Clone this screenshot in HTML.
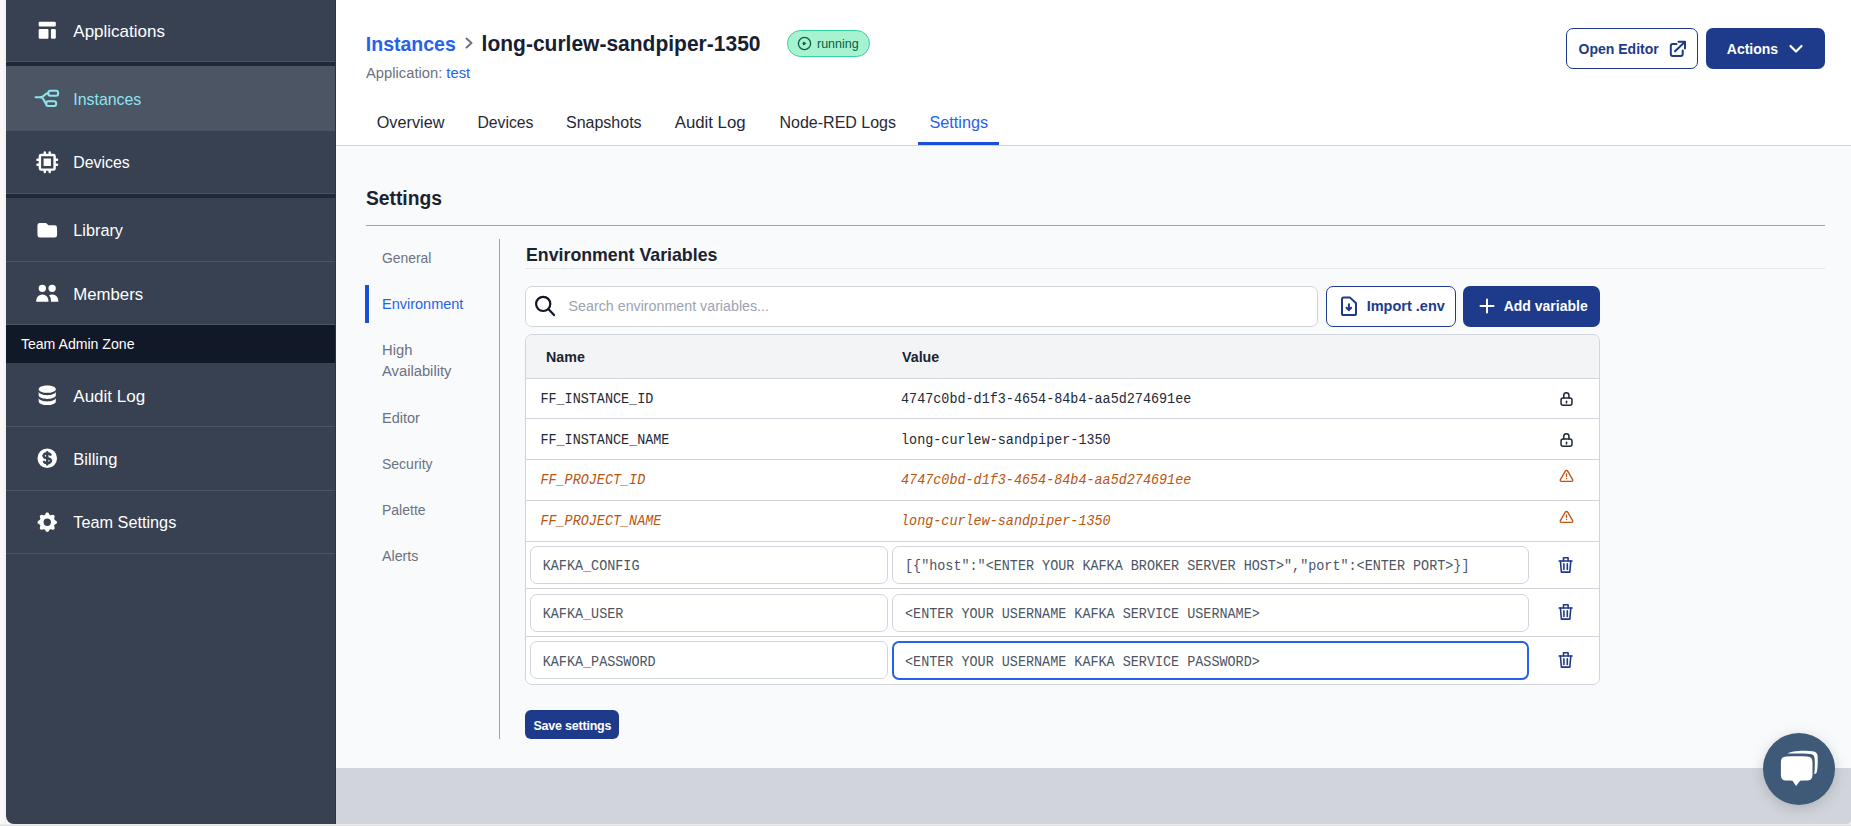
<!DOCTYPE html>
<html><head><meta charset="utf-8">
<style>
*{box-sizing:border-box;margin:0;padding:0}
html,body{width:1851px;height:826px;overflow:hidden;background:#f8f8f8;font-family:"Liberation Sans",sans-serif}
body{position:relative}
.a{position:absolute;display:block}
.t{position:absolute;white-space:nowrap;line-height:1}
</style></head><body>

<div class="a" style="left:4px;top:0px;width:2px;height:826px;background:#f2f2f2"></div>
<div class="a" style="left:0px;top:824px;width:1851px;height:1px;background:#ececec"></div>
<div class="a" style="left:0px;top:825px;width:1851px;height:1px;background:#e0e0e0"></div>
<div class="a" style="left:6px;top:0px;width:1845px;height:824px;background:#f9fafb;border-radius:0 0 4px 8px"></div>
<div class="a" style="left:336px;top:768px;width:1515px;height:56px;background:#d1d5db;border-radius:0 0 4px 0"></div>
<div class="a" style="left:336px;top:0px;width:1515px;height:146px;background:#fff;border-bottom:1px solid #d1d5db"></div>
<div class="a" style="left:6px;top:0px;width:330px;height:824px;background:#374151;border-radius:0 0 0 8px"></div>
<div class="a" style="left:6px;top:0px;width:329px;height:62px;background:#374151;border-bottom:1px solid #4b5563;"></div>
<div class="t" style="left:73.30px;top:23px;font-size:17px;color:#ffffff;font-weight:400;font-family:'Liberation Sans',sans-serif;font-style:normal;">Applications</div>
<svg class="a" style="left:34.75px;top:17.75px" width="24.5" height="24.5" viewBox="0 0 20 20"><path fill="#fff" d="M3 4a1 1 0 011-1h12a1 1 0 011 1v2a1 1 0 01-1 1H4a1 1 0 01-1-1V4zM3 10a1 1 0 011-1h6a1 1 0 011 1v6a1 1 0 01-1 1H4a1 1 0 01-1-1v-6zM14 9a1 1 0 00-1 1v6a1 1 0 001 1h2a1 1 0 001-1v-6a1 1 0 00-1-1h-2z"/></svg>
<div class="a" style="left:6px;top:62px;width:329px;height:4px;background:#1f2937"></div>
<div class="a" style="left:6px;top:66px;width:329px;height:65px;background:#4b5563;"></div>
<div class="t" style="left:73.30px;top:92px;font-size:15.9px;color:#8ee4ee;font-weight:400;font-family:'Liberation Sans',sans-serif;font-style:normal;">Instances</div>
<svg class="a" style="left:33px;top:86px" width="28" height="24" viewBox="0 0 28 24"><g fill="none" stroke="#8ee4ee" stroke-width="2.1" stroke-linejoin="round" stroke-linecap="round"><path d="M2.6 11.2H7.6C9.2 11.2 10.2 10.4 11.2 9.4L12.4 8.2C13.2 7.5 14 7.2 15.3 7.2"/><path d="M7.6 11.2C9 11.4 9.9 12.2 10.7 13.6L11.6 15.5C12.1 16.9 12.6 17.6 13.2 17.6"/><rect x="15.3" y="4.7" width="9.8" height="5" rx="2"/><rect x="13.2" y="15.2" width="9.9" height="4.8" rx="2"/></g></svg>
<div class="a" style="left:6px;top:131px;width:329px;height:63px;background:#374151;border-bottom:1px solid #4b5563;"></div>
<div class="t" style="left:73.30px;top:155px;font-size:15.9px;color:#ffffff;font-weight:400;font-family:'Liberation Sans',sans-serif;font-style:normal;">Devices</div>
<svg class="a" style="left:34.75px;top:149.75px" width="24.5" height="24.5" viewBox="0 0 20 20"><path fill="#fff" fill-rule="evenodd" clip-rule="evenodd" d="M13 7H7v6h6V7z M7 2a1 1 0 012 0v1h2V2a1 1 0 112 0v1h2a2 2 0 012 2v2h1a1 1 0 110 2h-1v2h1a1 1 0 110 2h-1v2a2 2 0 01-2 2h-2v1a1 1 0 11-2 0v-1H9v1a1 1 0 11-2 0v-1H5a2 2 0 01-2-2v-2H2a1 1 0 110-2h1V9H2a1 1 0 010-2h1V5a2 2 0 012-2h2V2zM5 5h10v10H5V5z"/></svg>
<div class="a" style="left:6px;top:194px;width:329px;height:4px;background:#1f2937"></div>
<div class="a" style="left:6px;top:198px;width:329px;height:64px;background:#374151;border-bottom:1px solid #4b5563;"></div>
<div class="t" style="left:73.30px;top:222px;font-size:16.25px;color:#ffffff;font-weight:400;font-family:'Liberation Sans',sans-serif;font-style:normal;">Library</div>
<svg class="a" style="left:34.75px;top:218.05px" width="24.5" height="24.5" viewBox="0 0 20 20"><path fill="#fff" d="M2 6a2 2 0 012-2h5l2 2h5a2 2 0 012 2v6a2 2 0 01-2 2H4a2 2 0 01-2-2V6z"/></svg>
<div class="a" style="left:6px;top:262px;width:329px;height:63px;background:#374151;border-bottom:1px solid #4b5563;"></div>
<div class="t" style="left:73.30px;top:287px;font-size:16.75px;color:#ffffff;font-weight:400;font-family:'Liberation Sans',sans-serif;font-style:normal;">Members</div>
<svg class="a" style="left:34.75px;top:280.75px" width="24.5" height="24.5" viewBox="0 0 20 20"><path fill="#fff" d="M9 6a3 3 0 11-6 0 3 3 0 016 0zM17 6a3 3 0 11-6 0 3 3 0 016 0zM12.93 17c.046-.327.07-.66.07-1a6.97 6.97 0 00-1.5-4.33A5 5 0 0119 16v1h-6.07zM6 11a5 5 0 015 5v1H1v-1a5 5 0 015-5z"/></svg>
<div class="a" style="left:6px;top:325px;width:329px;height:38px;background:#111827"></div>
<div class="t" style="left:20.90px;top:337px;font-size:14.1px;color:#ffffff;font-weight:400;font-family:'Liberation Sans',sans-serif;font-style:normal;">Team Admin Zone</div>
<div class="a" style="left:6px;top:363px;width:329px;height:64px;background:#374151;border-bottom:1px solid #4b5563;"></div>
<div class="t" style="left:73.30px;top:388px;font-size:17px;color:#ffffff;font-weight:400;font-family:'Liberation Sans',sans-serif;font-style:normal;">Audit Log</div>
<svg class="a" style="left:34.75px;top:382.95px" width="24.5" height="24.5" viewBox="0 0 20 20"><path fill="#fff" d="M3 12v3c0 1.657 3.134 3 7 3s7-1.343 7-3v-3c0 1.657-3.134 3-7 3s-7-1.343-7-3z M3 7v3c0 1.657 3.134 3 7 3s7-1.343 7-3V7c0 1.657-3.134 3-7 3S3 8.657 3 7z M17 5c0 1.657-3.134 3-7 3S3 6.657 3 5s3.134-3 7-3 7 1.343 7 3z"/></svg>
<div class="a" style="left:6px;top:427px;width:329px;height:64px;background:#374151;border-bottom:1px solid #4b5563;"></div>
<div class="t" style="left:73.30px;top:451px;font-size:16.5px;color:#ffffff;font-weight:400;font-family:'Liberation Sans',sans-serif;font-style:normal;">Billing</div>
<svg class="a" style="left:34.75px;top:445.95px" width="24.5" height="24.5" viewBox="0 0 20 20"><path fill="#fff" fill-rule="evenodd" clip-rule="evenodd" d="M8.433 7.418c.155-.103.346-.196.567-.267v1.698a2.305 2.305 0 01-.567-.267C8.07 8.34 8 8.114 8 8c0-.114.07-.34.433-.582zM11 12.849v-1.698c.22.071.412.164.567.267.364.243.433.468.433.582 0 .114-.07.34-.433.582a2.305 2.305 0 01-.567.267z M10 18a8 8 0 100-16 8 8 0 000 16zm1-13a1 1 0 10-2 0v.092a4.535 4.535 0 00-1.676.662C6.602 6.234 6 7.009 6 8c0 .99.602 1.765 1.324 2.246.48.32 1.054.545 1.676.662v1.941c-.391-.127-.68-.317-.843-.504a1 1 0 10-1.51 1.31c.562.649 1.413 1.076 2.353 1.253V15a1 1 0 102 0v-.092a4.535 4.535 0 001.676-.662C13.398 13.766 14 12.991 14 12c0-.99-.602-1.765-1.324-2.246A4.535 4.535 0 0011 9.092V7.151c.391.127.68.317.843.504a1 1 0 101.511-1.31c-.563-.649-1.413-1.076-2.354-1.253V5z"/></svg>
<div class="a" style="left:6px;top:491px;width:329px;height:63px;background:#374151;border-bottom:1px solid #4b5563;"></div>
<div class="t" style="left:73.30px;top:514px;font-size:16.25px;color:#ffffff;font-weight:400;font-family:'Liberation Sans',sans-serif;font-style:normal;">Team Settings</div>
<svg class="a" style="left:34.75px;top:509.75px" width="24.5" height="24.5" viewBox="0 0 20 20"><path fill="#fff" fill-rule="evenodd" clip-rule="evenodd" d="M11.49 3.17c-.38-1.56-2.6-1.56-2.98 0a1.532 1.532 0 01-2.286.948c-1.372-.836-2.942.734-2.106 2.106.54.886.061 2.042-.947 2.287-1.561.379-1.561 2.6 0 2.978a1.532 1.532 0 01.947 2.287c-.836 1.372.734 2.942 2.106 2.106a1.532 1.532 0 012.287.947c.379 1.561 2.6 1.561 2.978 0a1.533 1.533 0 012.287-.947c1.372.836 2.942-.734 2.106-2.106a1.533 1.533 0 01.947-2.287c1.561-.379 1.561-2.6 0-2.978a1.532 1.532 0 01-.947-2.287c.836-1.372-.734-2.942-2.106-2.106a1.532 1.532 0 01-2.287-.947zM10 13a3 3 0 100-6 3 3 0 000 6z"/></svg>
<div class="a" style="left:335px;top:0px;width:1px;height:824px;background:rgba(0,0,0,0.2)"></div>
<div class="t" style="left:365.80px;top:35px;font-size:19.5px;color:#2563eb;font-weight:700;font-family:'Liberation Sans',sans-serif;font-style:normal;transform:scaleY(1.07);transform-origin:0 16px;">Instances</div>
<svg class="a" style="left:463px;top:36.3px;" width="12" height="14" viewBox="0 0 12 14"><path d="M3.5 2.5L8.5 7L3.5 11.5" fill="none" stroke="#6b7280" stroke-width="2" stroke-linecap="round" stroke-linejoin="round"/></svg>
<div class="t" style="left:481.60px;top:33px;font-size:21px;color:#172033;font-weight:700;font-family:'Liberation Sans',sans-serif;font-style:normal;transform:scaleY(1.05);transform-origin:0 18px;">long-curlew-sandpiper-1350</div>
<div class="a" style="left:787px;top:30px;width:83px;height:27px;background:#a7f3d0;border:1px solid #34d399;border-radius:14px"></div>
<svg class="a" style="left:797px;top:36px;" width="15" height="15" viewBox="0 0 15 15"><circle cx="7.5" cy="7.5" r="6.1" fill="none" stroke="#065f46" stroke-width="1.3"/><path d="M6.2 5.6v3.8l3.2-1.9z" fill="#065f46"/><circle cx="6.9" cy="7.5" r="1.3" fill="#065f46"/></svg>
<div class="t" style="left:817.00px;top:38px;font-size:12.5px;color:#065f46;font-weight:400;font-family:'Liberation Sans',sans-serif;font-style:normal;">running</div>
<div class="t" style="left:366.00px;top:66px;font-size:14.75px;color:#6b7280;font-weight:400;font-family:'Liberation Sans',sans-serif;font-style:normal;">Application: <span style="color:#2563eb">test</span></div>
<div class="t" style="left:376.70px;top:114px;font-size:16.25px;color:#1f2937;font-weight:400;font-family:'Liberation Sans',sans-serif;font-style:normal;">Overview</div>
<div class="t" style="left:477.40px;top:115px;font-size:15.75px;color:#1f2937;font-weight:400;font-family:'Liberation Sans',sans-serif;font-style:normal;">Devices</div>
<div class="t" style="left:566.00px;top:115px;font-size:16px;color:#1f2937;font-weight:400;font-family:'Liberation Sans',sans-serif;font-style:normal;">Snapshots</div>
<div class="t" style="left:674.70px;top:115px;font-size:16.8px;color:#1f2937;font-weight:400;font-family:'Liberation Sans',sans-serif;font-style:normal;">Audit Log</div>
<div class="t" style="left:779.50px;top:115px;font-size:16px;color:#1f2937;font-weight:400;font-family:'Liberation Sans',sans-serif;font-style:normal;">Node-RED Logs</div>
<div class="t" style="left:929.40px;top:114px;font-size:16.25px;color:#2563eb;font-weight:400;font-family:'Liberation Sans',sans-serif;font-style:normal;">Settings</div>
<div class="a" style="left:918px;top:142px;width:81px;height:3px;background:#1d4ed8"></div>
<div class="a" style="left:1566px;top:28px;width:132px;height:41px;border:1px solid #1e3a8a;border-radius:7px;background:#fff"></div>
<div class="t" style="left:1578.60px;top:42px;font-size:14px;color:#1e3a8a;font-weight:700;font-family:'Liberation Sans',sans-serif;font-style:normal;">Open Editor</div>
<svg class="a" style="left:1668px;top:39px;" width="20" height="20" viewBox="0 0 20 20"><g fill="none" stroke="#1e3a8a" stroke-width="2" stroke-linecap="round" stroke-linejoin="round"><path d="M8.5 5H4.8a2 2 0 00-2 2v8a2 2 0 002 2h7.9a2 2 0 002-2v-3.6"/><path d="M10.5 2.8H17V9.5"/><path d="M7 12.2L16.5 3.3"/></g></svg>
<div class="a" style="left:1706px;top:28px;width:119px;height:41px;background:#1e3a8a;border-radius:7px"></div>
<div class="t" style="left:1726.80px;top:42px;font-size:14px;color:#fff;font-weight:700;font-family:'Liberation Sans',sans-serif;font-style:normal;">Actions</div>
<svg class="a" style="left:1788px;top:43px;" width="16" height="12" viewBox="0 0 16 12"><path d="M2.5 3L8 8.5L13.5 3" fill="none" stroke="#fff" stroke-width="2.2" stroke-linecap="round" stroke-linejoin="round"/></svg>
<div class="t" style="left:366.00px;top:189px;font-size:19.25px;color:#1a2332;font-weight:700;font-family:'Liberation Sans',sans-serif;font-style:normal;transform:scaleY(1.08);transform-origin:0 16px;">Settings</div>
<div class="a" style="left:366px;top:225px;width:1459px;height:1px;background:#9ca3af"></div>
<div class="t" style="left:382.00px;top:252px;font-size:13.9px;color:#6b7280;font-weight:400;font-family:'Liberation Sans',sans-serif;font-style:normal;">General</div>
<div class="a" style="left:365px;top:285px;width:4px;height:38px;background:#1d4ed8"></div>
<div class="t" style="left:382.00px;top:297px;font-size:14.5px;color:#2563eb;font-weight:400;font-family:'Liberation Sans',sans-serif;font-style:normal;">Environment</div>
<div class="t" style="left:382.00px;top:343px;font-size:14.75px;color:#6b7280;font-weight:400;font-family:'Liberation Sans',sans-serif;font-style:normal;">High</div>
<div class="t" style="left:382.00px;top:364px;font-size:14.75px;color:#6b7280;font-weight:400;font-family:'Liberation Sans',sans-serif;font-style:normal;">Availability</div>
<div class="t" style="left:382.00px;top:411px;font-size:14.5px;color:#6b7280;font-weight:400;font-family:'Liberation Sans',sans-serif;font-style:normal;">Editor</div>
<div class="t" style="left:382.00px;top:457px;font-size:14px;color:#6b7280;font-weight:400;font-family:'Liberation Sans',sans-serif;font-style:normal;">Security</div>
<div class="t" style="left:382.00px;top:503px;font-size:14px;color:#6b7280;font-weight:400;font-family:'Liberation Sans',sans-serif;font-style:normal;">Palette</div>
<div class="t" style="left:382.00px;top:549px;font-size:14.25px;color:#6b7280;font-weight:400;font-family:'Liberation Sans',sans-serif;font-style:normal;">Alerts</div>
<div class="a" style="left:499px;top:239px;width:1px;height:500px;background:#9ca3af"></div>
<div class="t" style="left:526.00px;top:247px;font-size:17.75px;color:#1a2332;font-weight:700;font-family:'Liberation Sans',sans-serif;font-style:normal;">Environment Variables</div>
<div class="a" style="left:525px;top:268px;width:1300px;height:1px;background:#e5e7eb"></div>
<div class="a" style="left:525px;top:286px;width:793px;height:41px;background:#fff;border:1px solid #d1d5db;border-radius:7px"></div>
<svg class="a" style="left:533px;top:294px;" width="24" height="24" viewBox="0 0 24 24"><g fill="none" stroke="#111827" stroke-width="2.2" stroke-linecap="round"><circle cx="10.2" cy="9.9" r="7.1"/><path d="M15.4 15.1l5.6 6"/></g></svg>
<div class="t" style="left:568.60px;top:299px;font-size:14.25px;color:#9ca3af;font-weight:400;font-family:'Liberation Sans',sans-serif;font-style:normal;">Search environment variables...</div>
<div class="a" style="left:1326px;top:286px;width:130px;height:41px;background:#fff;border:1px solid #1e3a8a;border-radius:7px"></div>
<svg class="a" style="left:1339px;top:295px;" width="20" height="22" viewBox="0 0 20 22"><g fill="none" stroke="#1e3a8a" stroke-width="2" stroke-linecap="round" stroke-linejoin="round"><path d="M4.6 2.6h6.5l5.9 5.7v10.2a1.6 1.6 0 01-1.6 1.6H4.6A1.6 1.6 0 013 18.5V4.2A1.6 1.6 0 014.6 2.6z"/><path d="M9.9 9.2v6M7.6 12.8L9.9 15.1l2.3-2.3"/></g></svg>
<div class="t" style="left:1366.70px;top:299px;font-size:14.5px;color:#1e3a8a;font-weight:700;font-family:'Liberation Sans',sans-serif;font-style:normal;">Import .env</div>
<div class="a" style="left:1463px;top:286px;width:137px;height:41px;background:#1e3a8a;border-radius:7px"></div>
<svg class="a" style="left:1479px;top:298px;" width="16" height="16" viewBox="0 0 16 16"><path d="M8 1.5v13M1.5 8h13" stroke="#fff" stroke-width="2" stroke-linecap="round"/></svg>
<div class="t" style="left:1503.70px;top:299px;font-size:14px;color:#fff;font-weight:700;font-family:'Liberation Sans',sans-serif;font-style:normal;">Add variable</div>
<div class="a" style="left:525px;top:334px;width:1075px;height:351px;background:#fff;border:1px solid #d1d5db;border-radius:7px;overflow:hidden"></div>
<div class="a" style="left:526px;top:335px;width:1073px;height:43px;background:#f3f4f6;border-radius:6px 6px 0 0"></div>
<div class="t" style="left:546.00px;top:350px;font-size:14.25px;color:#1a2332;font-weight:700;font-family:'Liberation Sans',sans-serif;font-style:normal;">Name</div>
<div class="t" style="left:902.00px;top:350px;font-size:14.25px;color:#1a2332;font-weight:700;font-family:'Liberation Sans',sans-serif;font-style:normal;">Value</div>
<div class="a" style="left:526px;top:378px;width:1073px;height:1px;background:#d1d5db"></div>
<div class="a" style="left:526px;top:418px;width:1073px;height:1px;background:#d1d5db"></div>
<div class="a" style="left:526px;top:459px;width:1073px;height:1px;background:#d1d5db"></div>
<div class="a" style="left:526px;top:500px;width:1073px;height:1px;background:#d1d5db"></div>
<div class="a" style="left:526px;top:541px;width:1073px;height:1px;background:#d1d5db"></div>
<div class="a" style="left:526px;top:588px;width:1073px;height:1px;background:#d1d5db"></div>
<div class="a" style="left:526px;top:636px;width:1073px;height:1px;background:#d1d5db"></div>
<div class="t" style="left:540.40px;top:393px;font-size:13.45px;color:#1f2937;font-weight:400;font-family:'Liberation Mono',monospace;font-style:normal;transform:scaleY(1.1);transform-origin:0 10px;">FF_INSTANCE_ID</div>
<div class="t" style="left:901.00px;top:393px;font-size:13.45px;color:#1f2937;font-weight:400;font-family:'Liberation Mono',monospace;font-style:normal;transform:scaleY(1.1);transform-origin:0 10px;">4747c0bd-d1f3-4654-84b4-aa5d274691ee</div>
<svg class="a" style="left:1558px;top:390px;" width="18" height="18" viewBox="0 0 18 18"><g fill="none" stroke="#1f2937" stroke-width="1.5" stroke-linecap="round" stroke-linejoin="round"><rect x="3.05" y="8.1" width="10.9" height="7.25" rx="2"/><path d="M5.75 8.1V5.45a2.6 2.6 0 015.2 0V8.1"/><path d="M8.5 11.3v1.6"/></g></svg>
<div class="t" style="left:540.40px;top:434px;font-size:13.45px;color:#1f2937;font-weight:400;font-family:'Liberation Mono',monospace;font-style:normal;transform:scaleY(1.1);transform-origin:0 10px;">FF_INSTANCE_NAME</div>
<div class="t" style="left:901.00px;top:434px;font-size:13.45px;color:#1f2937;font-weight:400;font-family:'Liberation Mono',monospace;font-style:normal;transform:scaleY(1.1);transform-origin:0 10px;">long-curlew-sandpiper-1350</div>
<svg class="a" style="left:1558px;top:431px;" width="18" height="18" viewBox="0 0 18 18"><g fill="none" stroke="#1f2937" stroke-width="1.5" stroke-linecap="round" stroke-linejoin="round"><rect x="3.05" y="8.1" width="10.9" height="7.25" rx="2"/><path d="M5.75 8.1V5.45a2.6 2.6 0 015.2 0V8.1"/><path d="M8.5 11.3v1.6"/></g></svg>
<div class="t" style="left:540.40px;top:474px;font-size:13.45px;color:#b9550f;font-weight:400;font-family:'Liberation Mono',monospace;font-style:italic;transform:scaleY(1.1);transform-origin:0 10px;">FF_PROJECT_ID</div>
<div class="t" style="left:901.00px;top:474px;font-size:13.45px;color:#b9550f;font-weight:400;font-family:'Liberation Mono',monospace;font-style:italic;transform:scaleY(1.1);transform-origin:0 10px;">4747c0bd-d1f3-4654-84b4-aa5d274691ee</div>
<svg class="a" style="left:1558px;top:467px;" width="18" height="18" viewBox="0 0 18 18"><g fill="none" stroke="#bf5512" stroke-width="1.35" stroke-linecap="round" stroke-linejoin="round"><path d="M7.3 4.2c.55-.95 1.85-.95 2.4 0l4.9 8.4c.55.95-.15 1.75-1.2 1.75H3.6c-1.05 0-1.75-.8-1.2-1.75z"/><path d="M8.5 6.9v2.3"/><path d="M8.5 11.4v.1"/></g></svg>
<div class="t" style="left:540.40px;top:515px;font-size:13.45px;color:#b9550f;font-weight:400;font-family:'Liberation Mono',monospace;font-style:italic;transform:scaleY(1.1);transform-origin:0 10px;">FF_PROJECT_NAME</div>
<div class="t" style="left:901.00px;top:515px;font-size:13.45px;color:#b9550f;font-weight:400;font-family:'Liberation Mono',monospace;font-style:italic;transform:scaleY(1.1);transform-origin:0 10px;">long-curlew-sandpiper-1350</div>
<svg class="a" style="left:1558px;top:508px;" width="18" height="18" viewBox="0 0 18 18"><g fill="none" stroke="#bf5512" stroke-width="1.35" stroke-linecap="round" stroke-linejoin="round"><path d="M7.3 4.2c.55-.95 1.85-.95 2.4 0l4.9 8.4c.55.95-.15 1.75-1.2 1.75H3.6c-1.05 0-1.75-.8-1.2-1.75z"/><path d="M8.5 6.9v2.3"/><path d="M8.5 11.4v.1"/></g></svg>
<div class="a" style="left:530px;top:546px;width:358px;height:38px;background:#fff;border:1px solid #d1d5db;border-radius:7px"></div>
<div class="a" style="left:892px;top:546px;width:637px;height:38px;background:#fff;border:1px solid #d1d5db;border-radius:7px"></div>
<div class="t" style="left:542.70px;top:560px;font-size:13.45px;color:#4b5563;font-weight:400;font-family:'Liberation Mono',monospace;font-style:normal;transform:scaleY(1.1);transform-origin:0 10px;">KAFKA_CONFIG</div>
<div class="t" style="left:905.00px;top:560px;font-size:13.45px;color:#4b5563;font-weight:400;font-family:'Liberation Mono',monospace;font-style:normal;transform:scaleY(1.1);transform-origin:0 10px;">[{&quot;host&quot;:&quot;&lt;ENTER YOUR KAFKA BROKER SERVER HOST&gt;&quot;,&quot;port&quot;:&lt;ENTER PORT&gt;}]</div>
<svg class="a" style="left:1556px;top:554.5px;" width="20" height="20" viewBox="0 0 20 20"><g fill="none" stroke="#1e3a8a" stroke-width="1.6" stroke-linecap="round" stroke-linejoin="round"><path d="M3.1 6h12.9"/><path d="M4.4 6l1 11.1h8.4l1-11.1"/><path d="M7.5 6V2.8h4.6V6"/><path d="M7.9 8.9v5.5M11.3 8.9v5.5"/></g></svg>
<div class="a" style="left:530px;top:594px;width:358px;height:38px;background:#fff;border:1px solid #d1d5db;border-radius:7px"></div>
<div class="a" style="left:892px;top:594px;width:637px;height:38px;background:#fff;border:1px solid #d1d5db;border-radius:7px"></div>
<div class="t" style="left:542.70px;top:608px;font-size:13.45px;color:#4b5563;font-weight:400;font-family:'Liberation Mono',monospace;font-style:normal;transform:scaleY(1.1);transform-origin:0 10px;">KAFKA_USER</div>
<div class="t" style="left:905.00px;top:608px;font-size:13.45px;color:#4b5563;font-weight:400;font-family:'Liberation Mono',monospace;font-style:normal;transform:scaleY(1.1);transform-origin:0 10px;">&lt;ENTER YOUR USERNAME KAFKA SERVICE USERNAME&gt;</div>
<svg class="a" style="left:1556px;top:601.5px;" width="20" height="20" viewBox="0 0 20 20"><g fill="none" stroke="#1e3a8a" stroke-width="1.6" stroke-linecap="round" stroke-linejoin="round"><path d="M3.1 6h12.9"/><path d="M4.4 6l1 11.1h8.4l1-11.1"/><path d="M7.5 6V2.8h4.6V6"/><path d="M7.9 8.9v5.5M11.3 8.9v5.5"/></g></svg>
<div class="a" style="left:530px;top:641px;width:358px;height:38px;background:#fff;border:1px solid #d1d5db;border-radius:7px"></div>
<div class="a" style="left:892px;top:641px;width:637px;height:39px;background:#fff;border:2px solid #2563eb;border-radius:7px"></div>
<div class="t" style="left:542.70px;top:656px;font-size:13.45px;color:#4b5563;font-weight:400;font-family:'Liberation Mono',monospace;font-style:normal;transform:scaleY(1.1);transform-origin:0 10px;">KAFKA_PASSWORD</div>
<div class="t" style="left:905.00px;top:656px;font-size:13.45px;color:#4b5563;font-weight:400;font-family:'Liberation Mono',monospace;font-style:normal;transform:scaleY(1.1);transform-origin:0 10px;">&lt;ENTER YOUR USERNAME KAFKA SERVICE PASSWORD&gt;</div>
<svg class="a" style="left:1556px;top:649.5px;" width="20" height="20" viewBox="0 0 20 20"><g fill="none" stroke="#1e3a8a" stroke-width="1.6" stroke-linecap="round" stroke-linejoin="round"><path d="M3.1 6h12.9"/><path d="M4.4 6l1 11.1h8.4l1-11.1"/><path d="M7.5 6V2.8h4.6V6"/><path d="M7.9 8.9v5.5M11.3 8.9v5.5"/></g></svg>
<div class="a" style="left:525px;top:710px;width:94px;height:29px;background:#1e3a8a;border-radius:6px"></div>
<div class="t" style="left:533.50px;top:720px;font-size:12.5px;color:#fff;font-weight:700;font-family:'Liberation Sans',sans-serif;font-style:normal;letter-spacing:-0.22px;transform:scaleY(1.08);transform-origin:0 10px;">Save settings</div>
<div class="a" style="left:1763px;top:733px;width:72px;height:72px;border-radius:50%;background:#3f5a79;box-shadow:0 3px 14px rgba(0,0,0,0.17)"></div>
<svg class="a" style="left:1763px;top:733px;" width="72" height="72" viewBox="0 0 72 72"><path fill="#fff" d="M24.4 20.6C27 18.6 31 18 36 17.9C42 17.8 48 17.9 51 18.6C53.8 19.3 54.6 21 54.7 24.5C54.9 30 54.6 36 53.8 39C53.3 40.5 52.3 41 51.3 41.2C51.8 36 52 30 51.6 25.5C51.3 22.5 50.3 21.2 47.5 20.9C41 20.4 30 20.4 24.4 20.6Z"/><path fill="#fff" d="M17.9 30C17.9 25.2 19.3 23.6 23.5 23.4C30 23.1 38 23.1 44 23.4C48 23.6 49.5 25.2 49.5 30L49.5 41C49.5 45.8 48 47.3 44 47.6C42 47.7 39.5 47.7 37.1 47.7L33.1 53.1L29.5 47.7C27.5 47.7 25.5 47.7 23.5 47.6C19.3 47.4 17.9 45.8 17.9 41Z"/></svg>
</body></html>
